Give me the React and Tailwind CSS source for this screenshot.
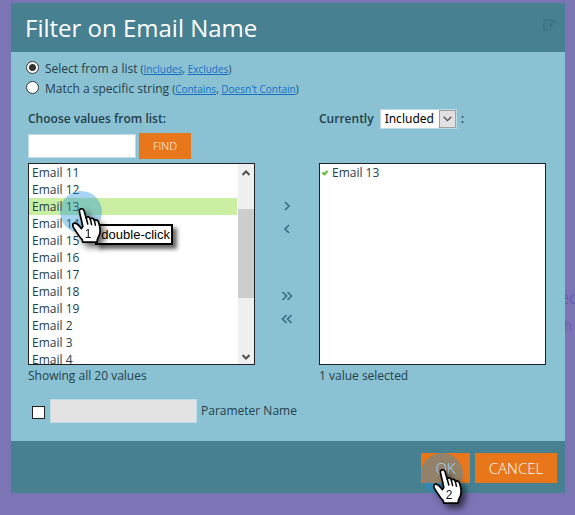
import React, { useState } from "react";

const EMAILS = ["11", "12", "13", "14", "15", "16", "17", "18", "19", "2", "3", "4"];

function Pointer({ step }) {
  return (
    <svg width="32" height="38" viewBox="0 0 32 38" className="block overflow-visible drop-shadow-[4px_4px_3px_rgba(0,0,0,0.6)]" aria-hidden="true">
      <path
        d="M7.4 3.6C6.6 0.6 11.2 -0.4 12 2.6L14.2 10C15.2 8.2 17.9 8.6 18.3 11C19.4 9.6 22 10.3 22.4 12.6C23.6 11.4 26 12 26.6 14.4C28 18.4 28.8 22 27.6 26.2C26.8 28.8 25.6 30 25.4 32L25 34.2H10.8L10.2 31.6C7.4 29 5.2 25 2.4 21C0 17.8 0.2 14.8 3.2 15.2C5.8 15.6 7.2 18 9.4 20.6L10.8 18.2Z"
        fill="#fff"
        stroke="#000"
        strokeWidth="1.7"
        strokeLinejoin="round"
      />
      <path d="M14.2 10L15.8 16M18.3 11L19.6 16.6M22.4 12.6L23.4 17.2" fill="none" stroke="#000" strokeWidth="1.5" strokeLinecap="round" />
      <text x="16" y="30" textAnchor="middle" fontSize="12" fontFamily="'Liberation Sans', sans-serif" fill="#111">
        {step}
      </text>
    </svg>
  );
}

function Chevron({ double, left }) {
  return (
    <svg width="12" height="10" viewBox="0 0 12 10" fill="none" stroke="#3c6c88" strokeWidth="1.7" aria-hidden="true" className={left ? "block rotate-180" : "block"}>
      {double ? <path d="M1.5 1L5.5 5L1.5 9M6.5 1L10.5 5L6.5 9" /> : <path d="M4 1L8 5L4 9" />}
    </svg>
  );
}

function MoveButton({ label, double, left }) {
  return (
    <button type="button" aria-label={label} className="flex h-[23px] w-6 items-center justify-center">
      <Chevron double={double} left={left} />
    </button>
  );
}

function ModeOption({ id, text, links, checked, onChange }) {
  return (
    <div className="flex h-5 items-center gap-1.5">
      <input
        type="radio"
        name="mode"
        id={id}
        checked={checked}
        onChange={onChange}
        className="-mt-1 size-[13px] shrink-0 appearance-none rounded-full border border-[#333] bg-white checked:bg-[radial-gradient(circle,#333_0_3px,#fff_4px)]"
      />
      <div>
        <label htmlFor={id}>{text}</label>{" "}
        <span className="text-[10px]">
          (<a href="#" className="text-[#1470c4] underline">{links[0]}</a>,{" "}
          <a href="#" className="text-[#1470c4] underline">{links[1]}</a>)
        </span>
      </div>
    </div>
  );
}

export default function App() {
  const [mode, setMode] = useState("list");
  return (
    <div className="relative min-h-screen overflow-hidden bg-[#7b74b5] pt-[3px] pr-2.5 pb-[22px] pl-[11px] font-['Open_Sans',sans-serif] text-xs text-[#24404b]">
      <div className="absolute top-[284px] right-0 w-4 text-[#5a57ae]" aria-hidden="true">
        <p className="text-lg leading-[26px] font-light">ec</p>
        <p className="text-sm leading-8 font-light">th</p>
      </div>

      <form role="dialog" aria-labelledby="title" className="relative bg-[#8ac2d3]" onSubmit={(e) => e.preventDefault()}>
        <header className="flex h-[49px] items-center justify-between bg-[#468091] pr-2.5 pl-3.5">
          <h1 id="title" className="text-2xl text-white">Filter on Email Name</h1>
          <button type="button" aria-label="Help" className="mb-1.5">
            <svg width="12" height="12" viewBox="0 0 12 12" fill="none" stroke="#3a6982" strokeWidth="1.2" aria-hidden="true">
              <path d="M5 11H1V1H11V4.5M5.6 6.4C5.6 4.2 9.2 4.2 9.2 6.2C9.2 7.6 7.4 7.4 7.4 9M7.4 10V11.4" />
            </svg>
          </button>
        </header>

        <main className="pr-[19px] pb-[18px] pl-[17px]">
          <fieldset className="-ml-0.5 pt-[7px]">
            <ModeOption id="mode-list" text="Select from a list" links={["Includes", "Excludes"]} checked={mode === "list"} onChange={() => setMode("list")} />
            <ModeOption id="mode-string" text="Match a specific string" links={["Contains", "Doesn't Contain"]} checked={mode === "string"} onChange={() => setMode("string")} />
          </fieldset>

          <div className="mt-2.5 grid grid-cols-[1fr_64px_1fr]">
            <section className="min-w-0">
              <label htmlFor="search" className="flex h-5 items-center font-semibold">Choose values from list:</label>
              <div className="mt-1 flex h-[26px] items-center gap-[3px]">
                <input id="search" type="text" className="h-6 w-[108px] border border-[#bfdbe8] bg-white px-1" />
                <button type="button" className="h-[26px] w-[52px] bg-[#e8761a] text-[11px] font-light text-white">FIND</button>
              </div>
              <div className="relative mt-1 flex h-[202px] border border-[#222] bg-white">
                <ul role="listbox" aria-label="Available values" className="min-w-0 flex-1 overflow-hidden">
                  {EMAILS.map((n) => (
                    <li key={n} role="option" aria-selected={n === "13"} className={n === "13" ? "h-[17px] bg-[#caeea2] pl-[3px] leading-[17px]" : "h-[17px] pl-[3px] leading-[17px]"}>
                      Email {n}
                    </li>
                  ))}
                </ul>
                <div className="ml-px flex w-4 flex-col items-center bg-[#f0f0f0] pt-1.5 pb-1" aria-hidden="true">
                  <svg width="8" height="6" viewBox="0 0 8 6" fill="none" stroke="#505050" strokeWidth="2"><path d="M0.5 5L4 1.5L7.5 5" /></svg>
                  <div className="mt-[33px] mb-auto h-[89px] w-full bg-[#cdcdcd]" />
                  <svg width="8" height="6" viewBox="0 0 8 6" fill="none" stroke="#505050" strokeWidth="2"><path d="M0.5 1L4 4.5L7.5 1" /></svg>
                </div>

                <div className="absolute top-[27px] left-[31px] size-[42px] rounded-full bg-[#2294dc]/40" />
                <div className="absolute top-[60px] left-[66px] flex h-[21px] w-[78px] items-center justify-end border-2 border-black bg-white pr-px font-['Liberation_Sans',sans-serif] text-[13px] text-black shadow-[4px_4px_4px_rgba(0,0,0,0.6)]">
                  double-click
                </div>
                <div className="absolute top-11 left-[43px]"><Pointer step="1" /></div>
              </div>
              <p className="mt-0.5 leading-[18px]">Showing all 20 values</p>
            </section>

            <div className="flex flex-col items-center pt-[85px]">
              <MoveButton label="Add selected" />
              <MoveButton label="Remove selected" left />
              <div className="h-11" />
              <MoveButton label="Add all" double />
              <MoveButton label="Remove all" double left />
            </div>

            <section className="min-w-0">
              <div className="flex h-5 items-center font-semibold">
                <label htmlFor="state">Currently</label>
                <div className="relative mr-1 ml-1.5">
                  <select id="state" defaultValue="Included" className="block h-5 w-[77px] appearance-none border border-[#bfdbe8] bg-white pl-1 font-['Noto_Sans',sans-serif] text-xs leading-4 font-normal text-black">
                    <option>Included</option>
                    <option>Excluded</option>
                  </select>
                  <span className="pointer-events-none absolute inset-y-px right-px flex w-[17px] items-center justify-center border border-[#a0a0a0] bg-[#e1e1e1]">
                    <svg width="9" height="6" viewBox="0 0 9 6" fill="none" stroke="#505050" strokeWidth="1.3" aria-hidden="true"><path d="M0.7 0.8L4.5 4.6L8.3 0.8" /></svg>
                  </span>
                </div>
                <span>:</span>
              </div>
              <ul role="listbox" aria-label="Selected values" className="mt-[34px] h-[202px] border border-[#222] bg-white">
                <li role="option" aria-selected="true" className="flex h-[17px] items-center gap-1 pl-0.5 leading-[17px]">
                  <svg width="6" height="6" viewBox="0 0 6 6" fill="none" stroke="#5cb531" strokeWidth="2" aria-hidden="true"><path d="M0.4 2.4L2.4 4.4L5.6 0.8" /></svg>
                  Email 13
                </li>
              </ul>
              <p className="mt-0.5 leading-[18px]">1 value selected</p>
            </section>
          </div>

          <div className="mt-3.5 flex h-6 items-center gap-1 pl-1">
            <input type="checkbox" id="param" className="mt-0.5 mr-px size-[13px] shrink-0 appearance-none border border-[#222] bg-white checked:bg-[#333]" />
            <input type="text" aria-label="Parameter value" disabled className="h-6 w-[147px] border border-[#bfdbe8] bg-[#e3e3e3] px-1" />
            <label htmlFor="param">Parameter Name</label>
          </div>
        </main>

        <footer className="flex h-[52px] items-start justify-end gap-[5px] bg-[#468091] pt-3 pr-2">
          <div className="relative">
            <button type="submit" className="h-[30px] w-[49px] bg-[#e8761a] text-[15px] font-light text-white">OK</button>
            <div className="absolute top-0 left-0 size-[42px] rounded-full bg-[#1496e0]/40" />
            <div className="absolute top-4 left-3"><Pointer step="2" /></div>
          </div>
          <button type="button" className="h-[30px] w-[82px] bg-[#e8761a] text-[15px] font-light text-white">CANCEL</button>
        </footer>
      </form>
    </div>
  );
}
